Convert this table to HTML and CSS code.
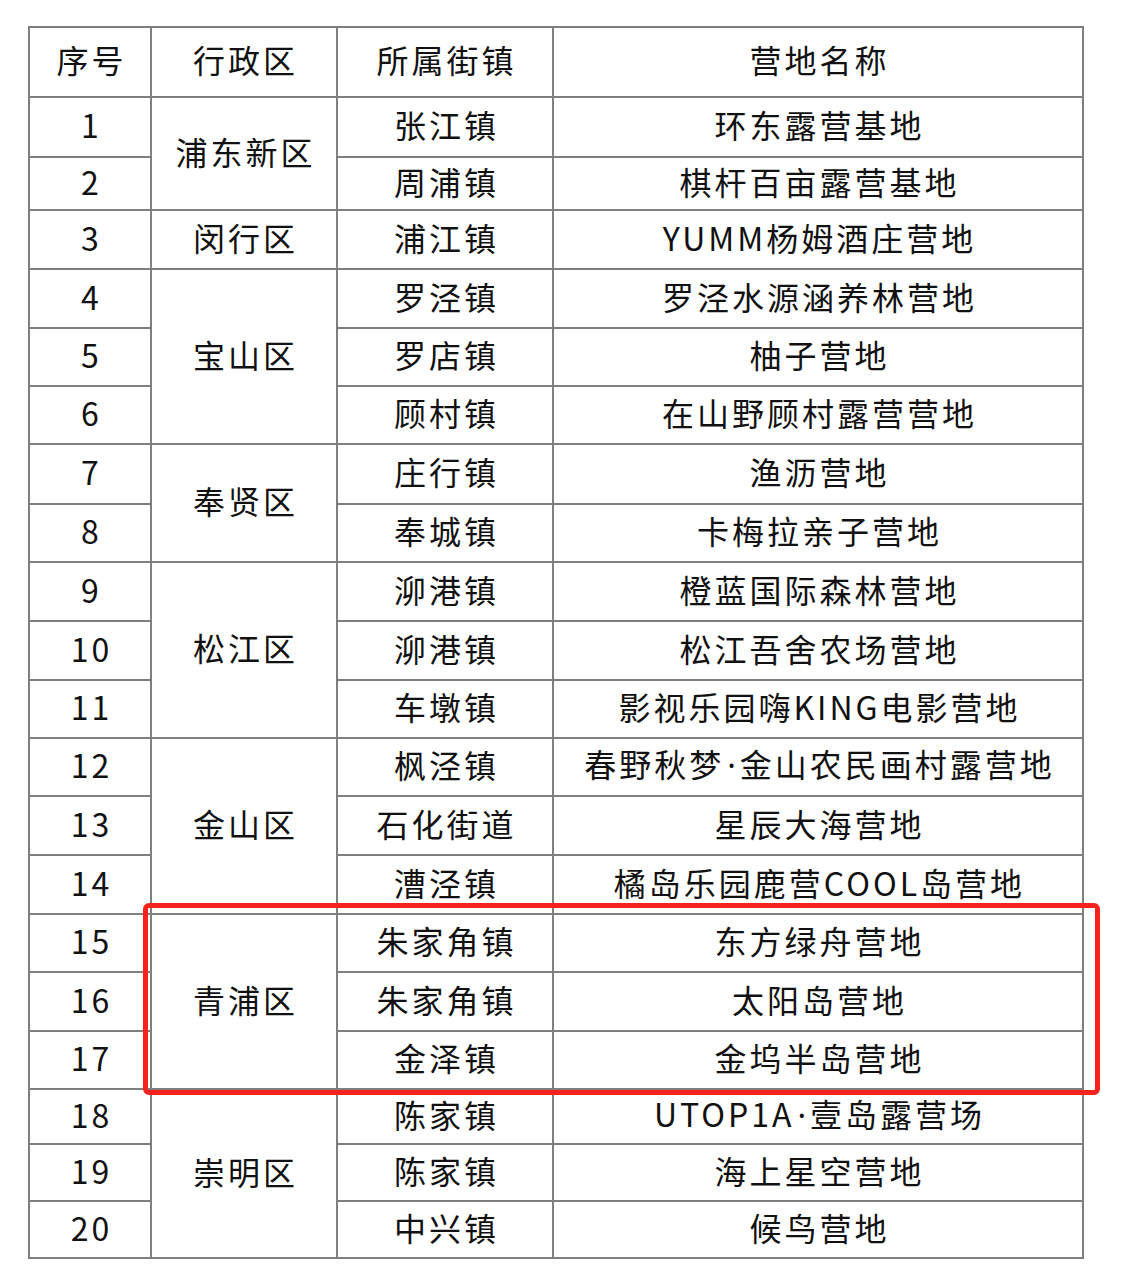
FILE: index.html
```html
<!DOCTYPE html>
<html lang="zh-CN">
<head>
<meta charset="utf-8">
<title>营地名单</title>
<link rel="stylesheet" href="styles.css">
</head>
<body>
<div class="page">
  <table class="list">
    <colgroup>
      <col class="c1"><col class="c2"><col class="c3"><col class="c4">
    </colgroup>
    <thead>
      <tr class="head"><th>序号</th><th>行政区</th><th>所属街镇</th><th>营地名称</th></tr>
    </thead>
    <tbody>
      <tr class="r60"><td>1</td><td rowspan="2">浦东新区</td><td>张江镇</td><td>环东露营基地</td></tr>
      <tr class="r53"><td>2</td><td>周浦镇</td><td>棋杆百亩露营基地</td></tr>
      <tr class="r59"><td>3</td><td>闵行区</td><td>浦江镇</td><td>YUMM杨姆酒庄营地</td></tr>
      <tr class="r59"><td>4</td><td rowspan="3">宝山区</td><td>罗泾镇</td><td>罗泾水源涵养林营地</td></tr>
      <tr class="r58"><td>5</td><td>罗店镇</td><td>柚子营地</td></tr>
      <tr class="r58"><td>6</td><td>顾村镇</td><td>在山野顾村露营营地</td></tr>
      <tr class="r60"><td>7</td><td rowspan="2">奉贤区</td><td>庄行镇</td><td>渔沥营地</td></tr>
      <tr class="r58"><td>8</td><td>奉城镇</td><td>卡梅拉亲子营地</td></tr>
      <tr class="r59"><td>9</td><td rowspan="3">松江区</td><td>泖港镇</td><td>橙蓝国际森林营地</td></tr>
      <tr class="r59"><td>10</td><td>泖港镇</td><td>松江吾舍农场营地</td></tr>
      <tr class="r58"><td>11</td><td>车墩镇</td><td>影视乐园嗨KING电影营地</td></tr>
      <tr class="r58"><td>12</td><td rowspan="3">金山区</td><td>枫泾镇</td><td>春野秋梦<span class="dot">·</span>金山农民画村露营地</td></tr>
      <tr class="r59"><td>13</td><td>石化街道</td><td>星辰大海营地</td></tr>
      <tr class="r59"><td>14</td><td>漕泾镇</td><td>橘岛乐园鹿营COOL岛营地</td></tr>
      <tr class="r58"><td>15</td><td rowspan="3">青浦区</td><td>朱家角镇</td><td>东方绿舟营地</td></tr>
      <tr class="r59"><td>16</td><td>朱家角镇</td><td>太阳岛营地</td></tr>
      <tr class="r58"><td>17</td><td>金泽镇</td><td>金坞半岛营地</td></tr>
      <tr class="r55"><td>18</td><td rowspan="3">崇明区</td><td>陈家镇</td><td>UTOP1A<span class="dot">·</span>壹岛露营场</td></tr>
      <tr class="r57"><td>19</td><td>陈家镇</td><td>海上星空营地</td></tr>
      <tr class="r56"><td>20</td><td>中兴镇</td><td>候鸟营地</td></tr>
    </tbody>
  </table>
  <div class="mark"></div>
</div>
</body>
</html>
```

FILE: styles.css
```css
html, body {
  margin: 0;
  padding: 0;
  background: #ffffff;
}
.page {
  position: relative;
  width: 1134px;
  height: 1266px;
  padding: 26px 0 0 28px;
  box-sizing: border-box;
}
.list {
  border-collapse: collapse;
  table-layout: fixed;
  width: 1054px;
  font-family: "Noto Sans CJK SC", "Noto Sans", sans-serif;
  font-size: 32px;
  color: #111111;
  letter-spacing: 3px;
}
.c1 { width: 122px; }
.c2 { width: 186px; }
.c3 { width: 216px; }
.c4 { width: 530px; }
.list th, .list td {
  border: 2px solid #7f7f7f;
  text-align: center;
  vertical-align: middle;
  padding: 0 0 6px 3px;
  font-weight: 400;
  line-height: 1;
}
.dot {
  font-family: "Noto Sans", "DejaVu Sans", sans-serif;
  letter-spacing: 4px;
  margin-left: 3px;
}
.head { height: 70px; }
.r53 { height: 53px; }
.r55 { height: 55px; }
.r56 { height: 57px; }
.r57 { height: 57px; }
.r58 { height: 58px; }
.r59 { height: 59px; }
.r60 { height: 60px; }
.mark {
  position: absolute;
  left: 143px;
  top: 903px;
  width: 957px;
  height: 192px;
  box-sizing: border-box;
  border: 5px solid #f5221d;
  border-radius: 6px;
}
```
